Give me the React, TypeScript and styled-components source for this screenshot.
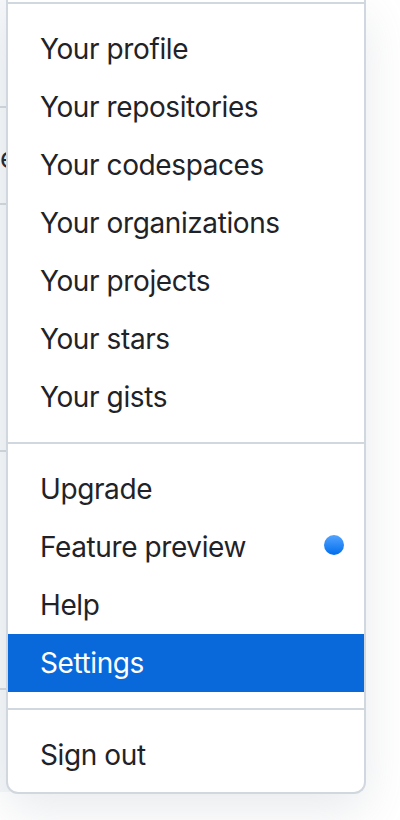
import React, { FC } from 'react'
import styled, { createGlobalStyle } from 'styled-components'

const GlobalStyle = createGlobalStyle`
  html, body {
    margin: 0;
    padding: 0;
    background: #ffffff;
  }
  body {
    font-family: Inter, "Liberation Sans", sans-serif;
    color: #1f2328;
    -webkit-font-smoothing: antialiased;
  }
`

interface Item {
  label: string
  dot?: boolean
  active?: boolean
}

const groups: Item[][] = [
  [
    { label: 'Your profile' },
    { label: 'Your repositories' },
    { label: 'Your codespaces' },
    { label: 'Your organizations' },
    { label: 'Your projects' },
    { label: 'Your stars' },
    { label: 'Your gists' },
  ],
  [
    { label: 'Upgrade' },
    { label: 'Feature preview', dot: true },
    { label: 'Help' },
    { label: 'Settings', active: true },
  ],
  [{ label: 'Sign out' }],
]

// page content peeking out from behind the menu
const rows = [
  { height: 108, text: '' },
  { height: 97, text: 'e' },
  { height: 247, text: '' },
  { height: 238, text: '' },
  { height: 102, text: '', last: true },
]

const App: FC = () => {
  return (
    <>
      <GlobalStyle />
      <Page>
        <Backdrop>
          {rows.map((r, i) => (
            <BackRow key={i} h={r.height} last={r.last}>
              {r.text && <BackText>{r.text}</BackText>}
            </BackRow>
          ))}
        </Backdrop>
        <Menu>
          <Divider />
          {groups.map((g, gi) => (
            <React.Fragment key={gi}>
              {gi > 0 && <Divider />}
              {g.map(item => (
                <MenuItem key={item.label} active={item.active}>
                  <span>{item.label}</span>
                  {item.dot && <Dot />}
                </MenuItem>
              ))}
            </React.Fragment>
          ))}
        </Menu>
      </Page>
    </>
  )
}

const Page = styled.div`
  position: relative;
  width: 400px;
  height: 820px;
  overflow: hidden;
  background: #ffffff;
`

const Backdrop = styled.div`
  display: flex;
  flex-direction: column;
  width: 220px;
`

const BackRow = styled.div<{ h: number; last?: boolean }>`
  display: flex;
  align-items: center;
  box-sizing: border-box;
  height: ${p => p.h}px;
  border-bottom: ${p => (p.last ? '0' : '2px solid #d0d7de')};
  background: #f6f8fa;
`

const BackText = styled.span`
  font-size: 28px;
  line-height: 42px;
  margin-top: 4px;
  color: #1f2328;
`

const Menu = styled.div`
  position: absolute;
  top: 0;
  left: 6px;
  width: 360px;
  box-sizing: border-box;
  display: flex;
  flex-direction: column;
  padding-bottom: 8px;
  background: #ffffff;
  border: 2px solid #d0d7de;
  border-top: 0;
  border-radius: 0 0 12px 12px;
  box-shadow: 0 16px 48px rgba(140, 149, 159, 0.2);
`

const Divider = styled.div`
  height: 2px;
  margin: 16px 0;
  background: #d0d7de;

  &:first-child {
    margin-top: 2px;
  }
`

const MenuItem = styled.div<{ active?: boolean }>`
  display: flex;
  align-items: center;
  justify-content: space-between;
  padding: 8px 16px 8px 32px;
  font-size: 28px;
  line-height: 42px;
  letter-spacing: -0.4px;
  white-space: nowrap;
  color: ${p => (p.active ? '#ffffff' : '#1f2328')};
  background: ${p => (p.active ? '#0969da' : 'transparent')};
`

const Dot = styled.span`
  width: 20px;
  height: 20px;
  margin: -4px 4px 0 0;
  border-radius: 50%;
  background: linear-gradient(#54a3ff, #006eed);
`

export default App
